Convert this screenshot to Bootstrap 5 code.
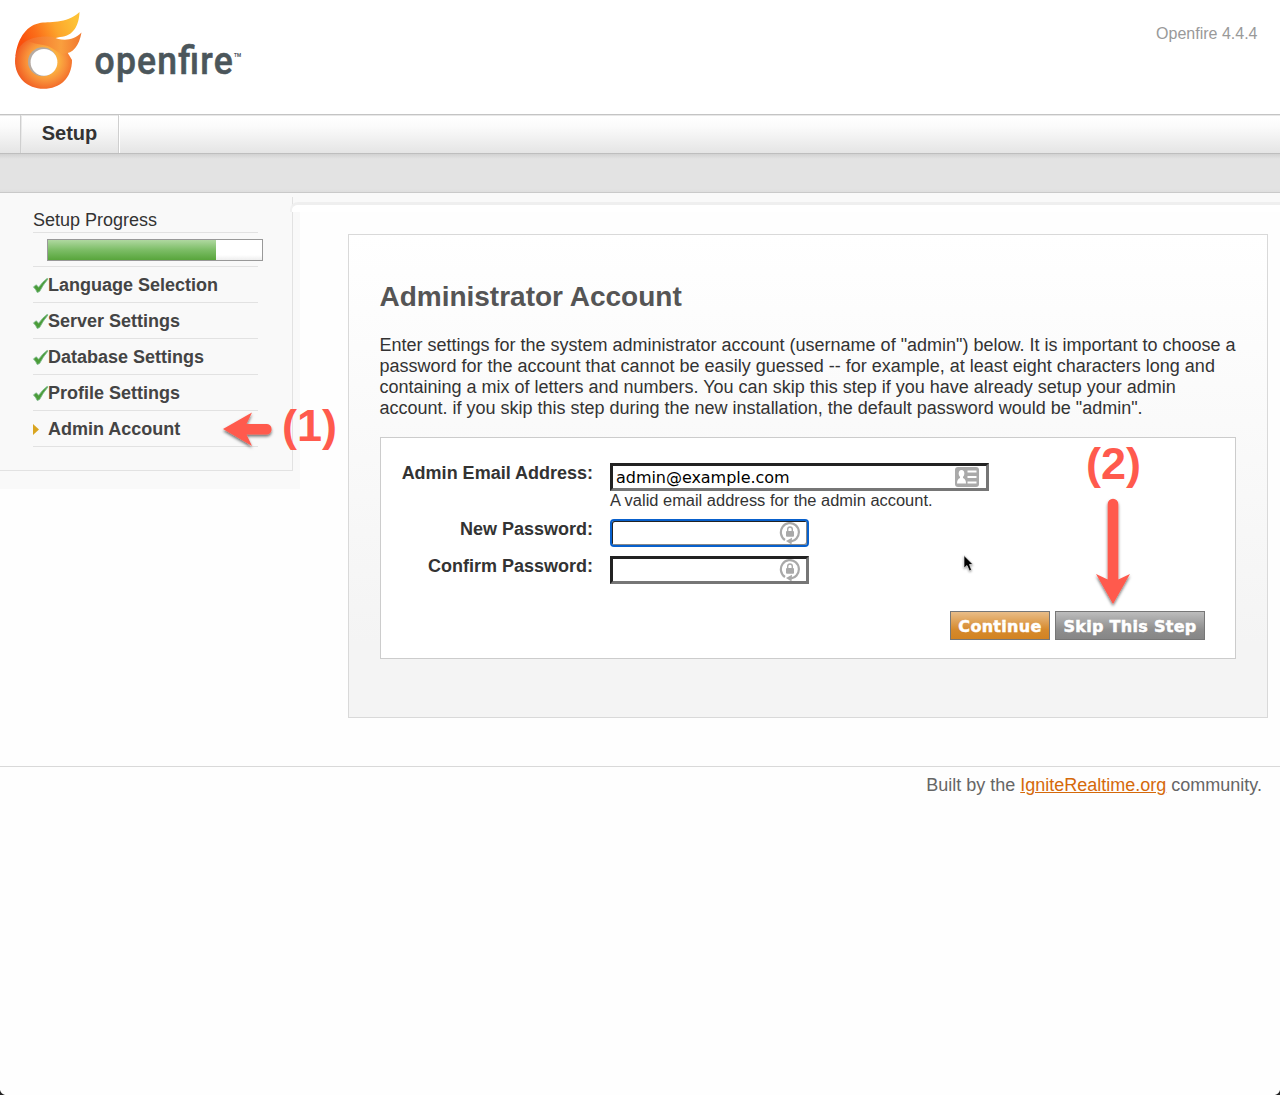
<!DOCTYPE html>
<html lang="en">
<head>
<meta charset="utf-8">
<meta name="viewport" content="width=device-width, initial-scale=1">
<title>Openfire Setup: Administrator Account</title>
<link href="https://cdn.jsdelivr.net/npm/bootstrap@5.3.0/dist/css/bootstrap.min.css" rel="stylesheet">
<style>
body{font-family:"Liberation Sans",Arial,sans-serif;font-size:18px;line-height:21px;color:#333;background:#fefefe;min-height:1095px;overflow:hidden}
.brandbar{height:114px;background:#fff}
.version{font-size:16px;color:#999;margin:23px 22.500px 0 0}
.tabbar{height:40px;background:linear-gradient(#fff 5%,#fbfbfb 30%,#e5e5e5);border-top:1px solid #c4c4c4;border-bottom:1px solid #bebebe;padding-left:20px;box-shadow:inset 0 1px #e8e8e8}
.tabitem{width:99px;border:solid #cfcfcf;border-width:0 1px;box-shadow:inset 1px 0 #e9e9e9,1px 0 #fff;font-size:20px;font-weight:700;padding-top:8px;text-align:center}
.subband{height:39px;background:linear-gradient(#d2d2d2,#e3e3e3 5px,#e3e3e3 35px,#dedede);border-bottom:1px solid #c9c9c9}
.steps{width:300px;height:296px;background:#f9f9f9;flex:none;padding-top:4px}
.stepsbox{width:293px;height:274px;border:solid #e2e2e2;border-width:0 1px 1px 0;padding:12px 34px 0 33px}
.stepstitle{height:24px;border-bottom:1px solid #e2e2e2;padding-top:1px}
.meterrow{height:34px;border-bottom:1px solid #e2e2e2;padding:6px 0 0 14px}
.meter{width:216px;height:22px;border:1px solid #999;border-radius:0;background:linear-gradient(#fff 75%,#eee)}
.meter .progress-bar{background:linear-gradient(#afd8a0,#7cbd66 50%,#58a53b)}
.stepitem{height:36px;border-bottom:1px solid #e2e2e2;font-weight:700;color:#444;padding-top:1px}
.stepitem svg{width:15px;height:18px;flex:none;overflow:visible}
.toplip{height:19px;margin-left:-7px;background:#f9f9f9;padding-top:9px}
.toplip div{height:10px;margin-left:-3px;border-top:3px solid #efefef;border-left:2px solid #f1f1f1;border-top-left-radius:8px;background:#fff}
.panelbox{width:920px;height:484px;margin:22px 0 0 48px;border:1px solid #d9d9d9;background:linear-gradient(#fff,#f4f4f4 85%,#f4f4f4);padding:45px 31px 0}
.panelbox h1{font-size:28px;line-height:34px;font-weight:700;color:#555;margin:0 0 21px -.6px}
.intro{margin:0 -10px 18px -.6px;white-space:nowrap}
.formbox{height:222px;border:1px solid #ccc;background:#fff;padding:25px 30px 0 0}
.flabel{width:212px;text-align:right;font-weight:700;flex:none;margin-right:17px}
.fieldwrap{position:relative;height:28px;border:3px solid;border-color:#222 #767676 #767676 #222;background:#fff;width:199px;color:#000}
.wide{width:379px}
.fieldwrap input{border:0;outline:0;background:transparent;width:100%;height:22px;padding:0 3px;font:16px "DejaVu Sans",Verdana,sans-serif;letter-spacing:-.04px;color:#000;display:block}
.fieldwrap svg{position:absolute;right:5px;top:0}
.wide svg{right:6px}
.focused{border:2px solid #0860cc;border-radius:4px;box-shadow:inset 1px 1px #222,inset -1px -1px #888}
.focused input{height:24px}
.focused svg{right:6px;top:1px}
.hint{font-size:16.460px;line-height:19px}
.gap-first{margin-top:9px}
.gap-next{margin-top:9px}
.actions{margin-top:27px;gap:5px}
.act{height:29px;border:1px solid #777;border-radius:0;padding:1px 0 0;font:bold 16px/27px "DejaVu Sans",Verdana,sans-serif;color:#fff;letter-spacing:.3px;text-align:center;white-space:nowrap;-webkit-text-stroke:.5px #fff}
.act-go{width:100px;background:linear-gradient(#e9bd88,#d68a2d 65%,#d28322)}
.act-skip{width:150px;background:linear-gradient(#bdbdbd,#8e8e8e 65%,#868686)}
.foot{margin-top:48px;border-top:1px solid #d9d9d9;padding:8px 18px 0 0;color:#666;text-align:right}
.foot a{color:#d5690a;text-underline-offset:1px;text-decoration-thickness:1px}
.notes{position:absolute;left:0;top:0;pointer-events:none}
</style>
<script src="https://cdn.jsdelivr.net/npm/bootstrap@5.3.0/dist/js/bootstrap.bundle.min.js"></script>
</head>
<body class="position-relative">
<svg width="0" height="0" class="position-absolute"><defs>
<symbol id="tick" viewBox="0 0 16 18" overflow="visible"><path d="M.5 11L3.500 8.800L6 11.500Q10 5.500 15 2L16 2.500Q10.500 9 7 16L4.500 17Q3 13.500 .5 11Z" fill="#4b9c38" stroke="#7ab98a" stroke-width=".9"/></symbol>
<symbol id="keyring" viewBox="0 0 22 22" overflow="visible"><path d="M6 18A9 9.200 0 1 1 17.500 16.500Q16 18.500 12 19.500" fill="none" stroke="#a9a9a9" stroke-width="2.200"/><path d="M7 19L13 15.700L12.500 22.500Z" fill="#a9a9a9"/><rect x="7" y="9" width="8" height="5.800" rx="1" fill="#a9a9a9"/><path d="M8.700 9V7.300a2.300 2.300 0 0 1 4.600 0V9" fill="none" stroke="#a9a9a9" stroke-width="1.400"/></symbol>
</defs></svg>
<header class="brandbar d-flex justify-content-between align-items-start">
<svg width="260" height="110" viewBox="0 0 260 110" role="img" aria-label="openfire">
<defs>
<radialGradient id="ring" gradientUnits="userSpaceOnUse" cx="46" cy="61" r="32"><stop offset=".4" stop-color="#fbb040"/><stop offset=".62" stop-color="#f8913a"/><stop offset="1" stop-color="#f0561f"/></radialGradient>
<linearGradient id="flame" gradientUnits="userSpaceOnUse" x1="22" y1="42" x2="74" y2="20"><stop offset="0" stop-color="#fa4f0c"/><stop offset=".3" stop-color="#fb701a"/><stop offset=".65" stop-color="#fda52b"/><stop offset="1" stop-color="#fdc136"/></linearGradient>
<linearGradient id="tongue" gradientUnits="userSpaceOnUse" x1="30" y1="38" x2="82" y2="40"><stop offset="0" stop-color="#f4702b"/><stop offset=".6" stop-color="#f99f3e"/><stop offset="1" stop-color="#f1752e"/></linearGradient>
</defs>
<path d="M15.500 56C17 41 25 26 39 23.200C49 21 66 24.500 79.500 12C79 25 74 36 60 37L30 44Z" fill="url(#flame)"/>
<path d="M72 60C72 78 60 88.800 43.500 88.800C27 88.800 15 77 15 61C15 46 27 37 43 36.800L60 40Z" fill="url(#ring)"/>
<path d="M28 41C35 37 45 35.500 53 37C60 40.500 73 42 81.500 32.500C79 46 73 54 63 53.700C57 53.500 53 46 43 45C38 44 32 43 28 41Z" fill="url(#tongue)"/>
<circle cx="42.500" cy="61.700" r="14.500" fill="#b5aaa2"/><circle cx="44" cy="62.300" r="13.400" fill="#fff"/>
<text transform="translate(94.500 74) scale(.91 1)" font-family="Roboto, sans-serif" font-size="39" font-weight="500" fill="#4b565b" stroke="#4b565b" stroke-width=".6" textLength="152" lengthAdjust="spacing">openfire</text>
<text x="234" y="57" font-family="Roboto, sans-serif" font-size="5.500" font-weight="700" fill="#4b565b" textLength="7" lengthAdjust="spacingAndGlyphs">TM</text>
</svg>
<div class="version">Openfire 4.4.4</div>
</header>
<nav class="tabbar d-flex"><div class="tabitem">Setup</div></nav>
<div class="subband"></div>
<main class="d-flex align-items-start">
<aside class="steps">
<div class="stepsbox">
<div class="stepstitle">Setup Progress</div>
<div class="meterrow"><div class="progress meter"><div class="progress-bar" style="width:78.700%"></div></div></div>
<div class="stepitem d-flex align-items-center"><svg><use href="#tick"/></svg>Language Selection</div>
<div class="stepitem d-flex align-items-center"><svg><use href="#tick"/></svg>Server Settings</div>
<div class="stepitem d-flex align-items-center"><svg><use href="#tick"/></svg>Database Settings</div>
<div class="stepitem d-flex align-items-center"><svg><use href="#tick"/></svg>Profile Settings</div>
<div class="stepitem d-flex align-items-center"><svg viewBox="0 0 15 18"><path d="M0 4L6 9.500L0 15Z" fill="#d9a520"/></svg>Admin Account</div>
</div>
</aside>
<section class="flex-grow-1">
<div class="toplip"><div></div></div>
<div class="panelbox">
<h1>Administrator Account</h1>
<p class="intro">Enter settings for the system administrator account (username of "admin") below. It is important to choose a<br>password for the account that cannot be easily guessed -- for example, at least eight characters long and<br>containing a mix of letters and numbers. You can skip this step if you have already setup your admin<br>account. if you skip this step during the new installation, the default password would be "admin".</p>
<form class="formbox">
<div class="d-flex"><label class="flabel" for="mail">Admin Email Address:</label>
<div><div class="fieldwrap wide"><input id="mail" type="text" value="admin@example.com"><svg width="26" height="22" viewBox="0 0 26 22"><rect x="1" y="1" width="24" height="20" rx="3" fill="#a9a9a9"/><ellipse cx="7.500" cy="7.500" rx="2.800" ry="3.500" fill="#fff"/><path d="M6 9h3v3q3 1 3 5.500H3q0-4.500 3-5.500Z" fill="#fff"/><path d="M13.500 5.500h9M13.500 11h9M13.500 16.500h9" stroke="#fff" stroke-width="2"/></svg></div><div class="hint">A valid email address for the admin account.</div></div></div>
<div class="d-flex gap-first"><label class="flabel" for="pw1">New Password:</label>
<div class="fieldwrap focused"><input id="pw1" type="password"><svg width="22" height="22"><use href="#keyring"/></svg></div></div>
<div class="d-flex gap-next"><label class="flabel" for="pw2">Confirm Password:</label>
<div class="fieldwrap"><input id="pw2" type="password"><svg width="22" height="22"><use href="#keyring"/></svg></div></div>
<div class="actions d-flex justify-content-end"><button type="button" class="btn act act-go">Continue</button><button type="button" class="btn act act-skip">Skip This Step</button></div>
</form>
</div>
</section>
</main>
<footer class="foot">Built by the <a href="#">IgniteRealtime.org</a> community.</footer>
<svg class="notes" width="1280" height="1095" viewBox="0 0 1280 1095">
<defs><filter id="drop" x="-40%" y="-40%" width="180%" height="180%"><feDropShadow dx="0" dy="2" stdDeviation="1.500" flood-color="#000" flood-opacity=".55"/></filter></defs>
<g fill="#ff5a4d" font-family="Liberation Sans, Arial, sans-serif" font-size="45" font-weight="700">
<path filter="url(#drop)" d="M223 429L252 412.500L246.500 424H267A5.300 5.300 0 0 1 267 434.500H246.500L252 446Z"/>
<path filter="url(#drop)" d="M1113 604L1096 574L1107.700 579.500V504A5.300 5.300 0 0 1 1118.300 504V579.500L1130 574Z"/>
<text x="282" y="441">(1)</text><text x="1086" y="479">(2)</text>
</g>
<path d="M964 555.500V568L967 565.500L969.500 571L971.500 570L969.500 564.500H973Z" fill="#000" stroke="#fff" stroke-width=".6" filter="drop-shadow(0 1px 1px #0006)"/>
<path d="M0 1090Q1 1094 5 1095H0ZM1280 1090Q1279 1094 1275 1095H1280Z" fill="#222"/>
</svg>
</body>
</html>
